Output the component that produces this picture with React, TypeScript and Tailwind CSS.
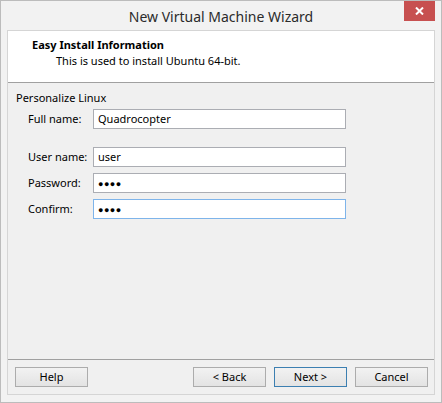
const fieldCls =
  "shrink-0 h-[20px] w-[253px] border border-[#abadb3] bg-white px-[4px] flex items-center text-[11px] text-black";

function Field({ label, value, secret, focused }: { label: string; value: string; secret?: boolean; focused?: boolean }) {
  return (
    <div className="flex items-center">
      <div className="shrink-0 w-[77px] pl-[12px] text-[11px] text-black whitespace-nowrap">{label}</div>
      <div className={fieldCls + (focused ? " !border-[#7eb4ea]" : "")}>
        {secret ? <span className="text-[9px] tracking-[0.5px] leading-none">●●●●</span> : value}
      </div>
    </div>
  );
}

function Btn({ children, primary }: { children: string; primary?: boolean }) {
  return (
    <button
      className={
        "shrink-0 h-[20px] w-[73px] border text-[11px] text-black bg-gradient-to-b from-[#f2f2f2] to-[#e3e3e3] " +
        (primary ? "border-[#3c7fb1]" : "border-[#acacac]")
      }
    >
      {children}
    </button>
  );
}

export default function App() {
  return (
    <div
      className="w-[442px] h-[403px] border border-[#bcbcbc] bg-[#f2f2f2] flex flex-col"
      style={{ fontFamily: '"Noto Sans", "Open Sans", sans-serif' }}
    >
      {/* title bar */}
      <div className="relative h-[29px] flex items-center justify-center">
        <span className="text-[14px] text-[#2b2b2b] pt-[1px]">New Virtual Machine Wizard</span>
        <div className="absolute right-[6px] top-[0px] w-[31px] h-[20px] bg-[#c75050] flex items-center justify-center">
          <svg width="9" height="8" viewBox="0 0 9 8">
            <path d="M1 0.5 L8 7.5 M8 0.5 L1 7.5" stroke="white" strokeWidth="2" />
          </svg>
        </div>
      </div>

      {/* client area */}
      <div className="mx-[6px] h-[365px] border border-[#d5d5d5] bg-[#f0f0f0] flex flex-col">
        <div className="h-[52px] bg-white border-b border-[#a0a0a0] pl-[24px] pt-[6px]">
          <div className="text-[11px] font-bold text-black leading-[16px]">Easy Install Information</div>
          <div className="text-[11px] text-black leading-[16px] pl-[24px]">This is used to install Ubuntu 64-bit.</div>
        </div>

        <div className="pl-[8px] pt-[7px]">
          <div className="text-[11px] text-black leading-[16px]">Personalize Linux</div>
          <div className="mt-[3px]">
            <Field label="Full name:" value="Quadrocopter" />
          </div>
          <div className="mt-[18px] flex flex-col gap-[6px]">
            <Field label="User name:" value="user" />
            <Field label="Password:" value="" secret />
            <Field label="Confirm:" value="" secret focused />
          </div>
        </div>

        <div className="mt-auto border-t border-[#a0a0a0] h-[35px] flex items-center pl-[7px] pr-[6px]">
          <Btn>Help</Btn>
          <div className="ml-auto flex gap-[8px]">
            <Btn>{"< Back"}</Btn>
            <Btn primary>{"Next >"}</Btn>
            <Btn>Cancel</Btn>
          </div>
        </div>
      </div>
    </div>
  );
}
